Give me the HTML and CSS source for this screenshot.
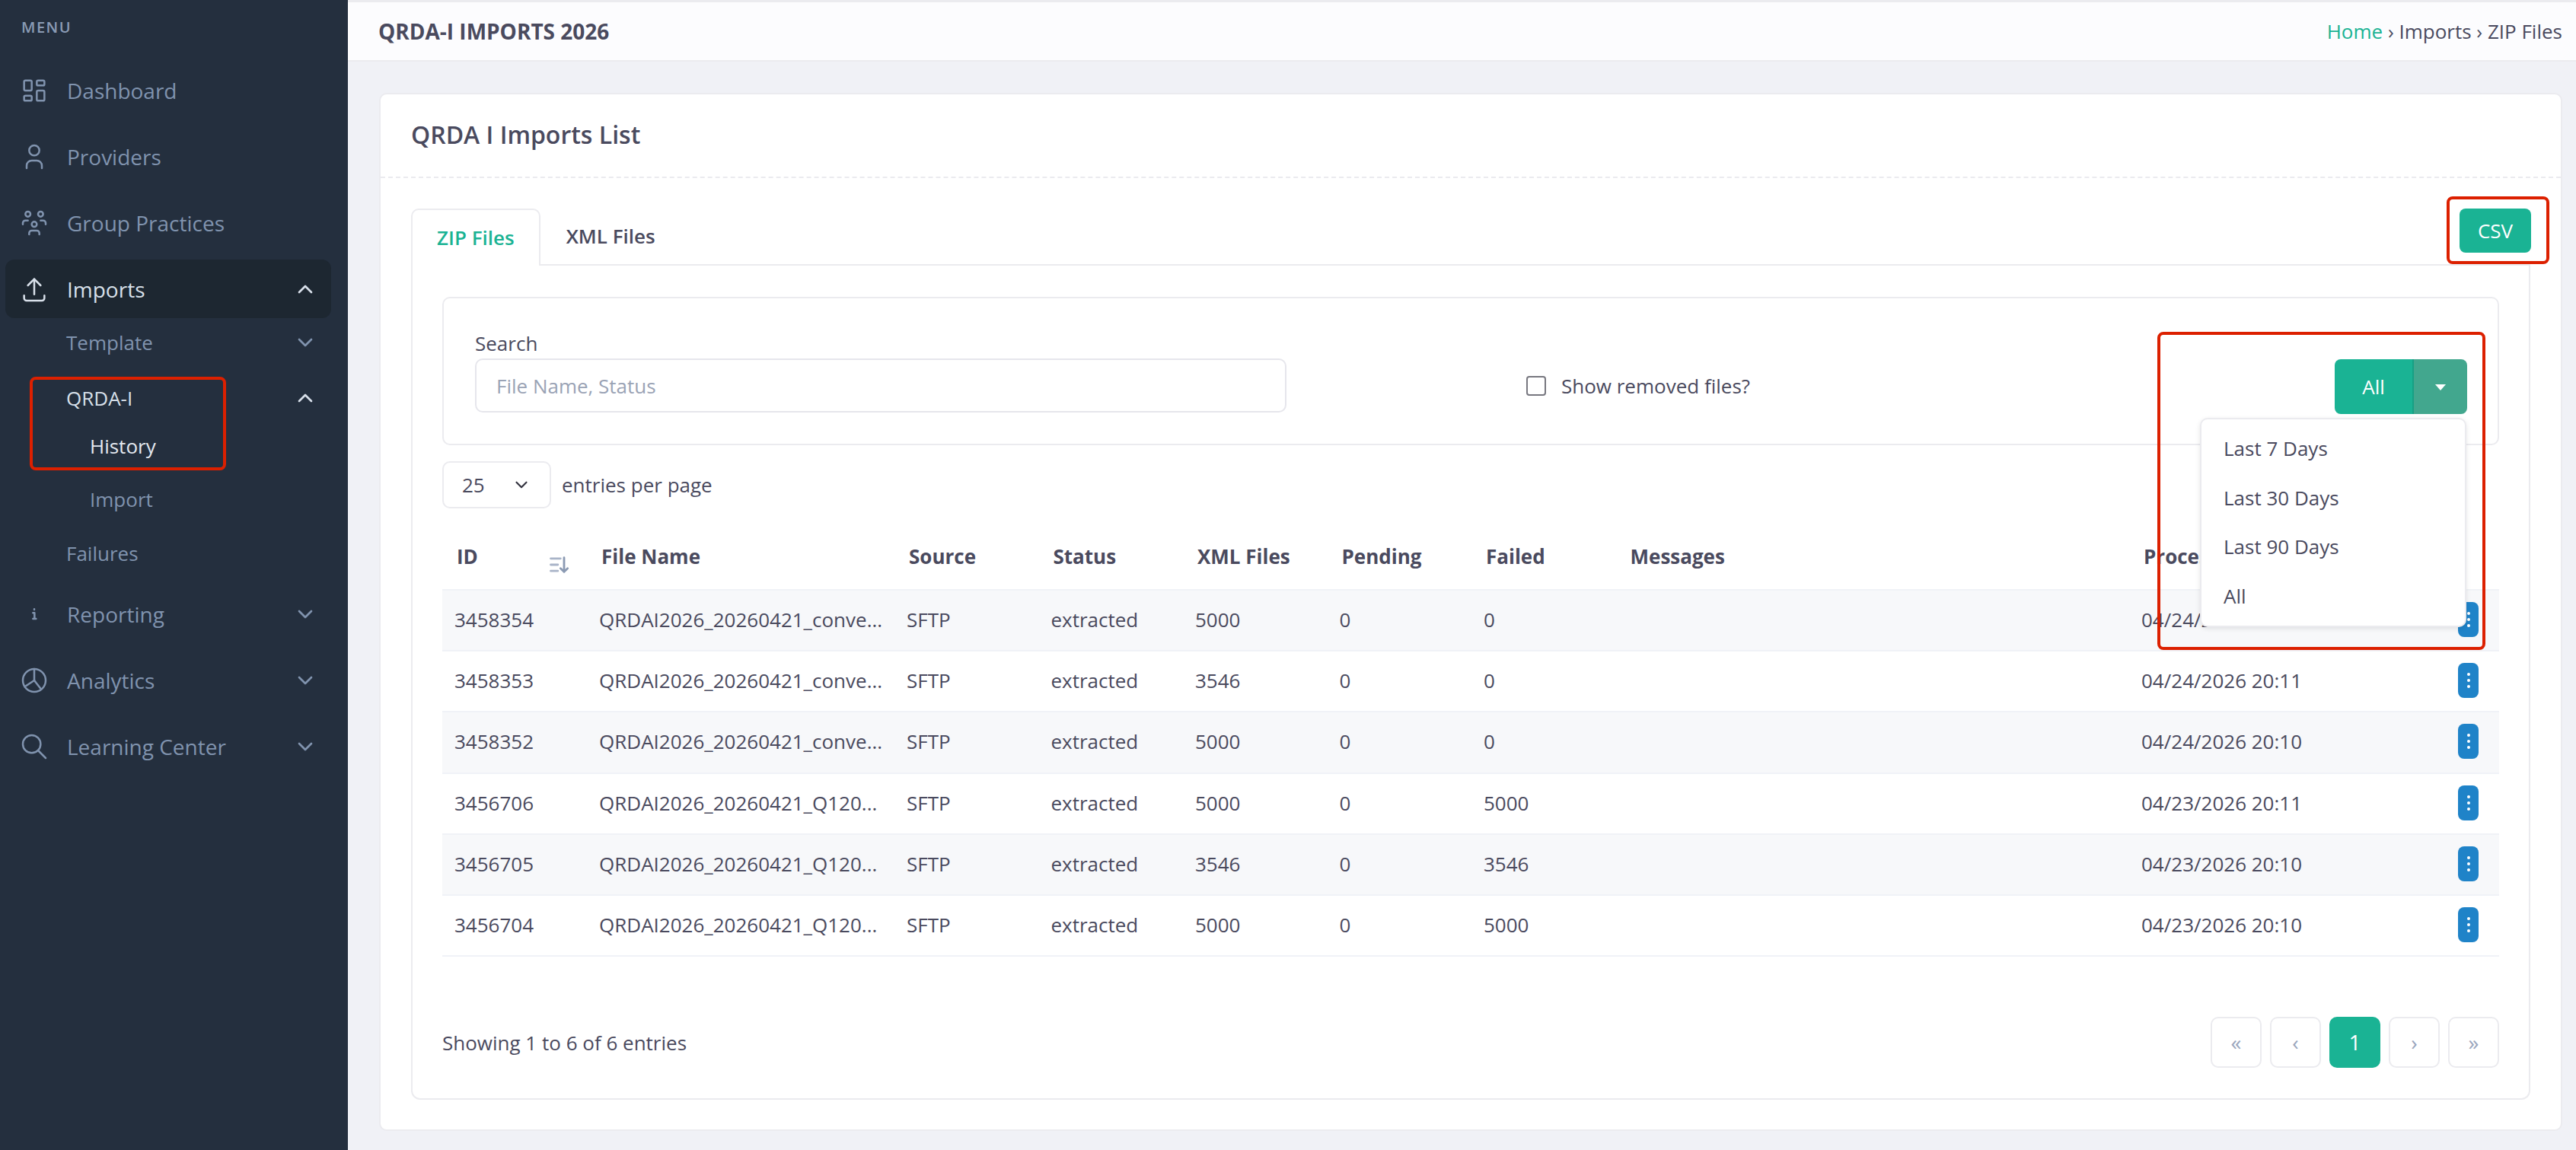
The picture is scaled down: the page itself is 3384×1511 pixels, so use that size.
FILE: index.html
```html
<!DOCTYPE html>
<html lang="en">
<head>
    <meta charset="UTF-8">
    <meta name="viewport" content="width=device-width, initial-scale=1.0">
    <title>QRDA-I Imports 2026</title>
    <link rel="stylesheet" href="styles.css">
</head>
<body>
    <aside class="sidebar">
        <div class="menu-label">MENU</div>
        <a class="nav-item">
            <svg class="nav-icon" viewBox="0 0 24 24"><path d="M5 4h4a1 1 0 0 1 1 1v6a1 1 0 0 1-1 1H5a1 1 0 0 1-1-1V5a1 1 0 0 1 1-1"/><path d="M5 16h4a1 1 0 0 1 1 1v2a1 1 0 0 1-1 1H5a1 1 0 0 1-1-1v-2a1 1 0 0 1 1-1"/><path d="M15 12h4a1 1 0 0 1 1 1v6a1 1 0 0 1-1 1h-4a1 1 0 0 1-1-1v-6a1 1 0 0 1 1-1"/><path d="M15 4h4a1 1 0 0 1 1 1v2a1 1 0 0 1-1 1h-4a1 1 0 0 1-1-1V5a1 1 0 0 1 1-1"/></svg>
            <span>Dashboard</span>
        </a>
        <a class="nav-item">
            <svg class="nav-icon" viewBox="0 0 24 24"><path d="M8 7a4 4 0 1 0 8 0a4 4 0 0 0-8 0"/><path d="M6 21v-2a4 4 0 0 1 4-4h4a4 4 0 0 1 4 4v2"/></svg>
            <span>Providers</span>
        </a>
        <a class="nav-item">
            <svg class="nav-icon" viewBox="0 0 24 24"><path d="M10 13a2 2 0 1 0 4 0a2 2 0 0 0-4 0"/><path d="M8 21v-1a2 2 0 0 1 2-2h4a2 2 0 0 1 2 2v1"/><path d="M15 5a2 2 0 1 0 4 0a2 2 0 0 0-4 0"/><path d="M17 10h2a2 2 0 0 1 2 2v1"/><path d="M5 5a2 2 0 1 0 4 0a2 2 0 0 0-4 0"/><path d="M3 13v-1a2 2 0 0 1 2-2h2"/></svg>
            <span>Group Practices</span>
        </a>
        <a class="nav-item nav-open">
            <svg class="nav-icon" viewBox="0 0 24 24"><path d="M4 17v2a2 2 0 0 0 2 2h12a2 2 0 0 0 2-2v-2"/><path d="M7 9l5-5l5 5"/><path d="M12 4v12"/></svg>
            <span>Imports</span>
            <svg class="chevron" viewBox="0 0 24 24"><path d="M6 15l6-6l6 6"/></svg>
        </a>
        <a class="sub-item">
            <span>Template</span>
            <svg class="chevron" viewBox="0 0 24 24"><path d="M6 9l6 6l6-6"/></svg>
        </a>
        <div class="sub-group">
            <div class="red-box nav-mark"></div>
            <a class="sub-item sub-active sub-qrda">
                <span>QRDA-I</span>
                <svg class="chevron" viewBox="0 0 24 24"><path d="M6 15l6-6l6 6"/></svg>
            </a>
            <a class="sub-sub-item sub-current">History</a>
        </div>
        <a class="sub-sub-item sub-import">Import</a>
        <a class="sub-item sub-failures"><span>Failures</span></a>
        <a class="nav-item">
            <svg class="nav-icon" viewBox="0 0 24 24"><path d="M11 11h1.2v4.6M11 15.6h2.4"/><path d="M12 8v.4"/></svg>
            <span>Reporting</span>
            <svg class="chevron" viewBox="0 0 24 24"><path d="M6 9l6 6l6-6"/></svg>
        </a>
        <a class="nav-item">
            <svg class="nav-icon" viewBox="0 0 24 24"><path d="M3 12a9 9 0 1 0 18 0a9 9 0 1 0-18 0"/><path d="M12 3v9"/><path d="M12 12l-7.500 5"/><path d="M12 12l5.500 7"/></svg>
            <span>Analytics</span>
            <svg class="chevron" viewBox="0 0 24 24"><path d="M6 9l6 6l6-6"/></svg>
        </a>
        <a class="nav-item">
            <svg class="nav-icon" viewBox="0 0 24 24"><path d="M3 10a7 7 0 1 0 14 0a7 7 0 1 0-14 0"/><path d="M21 21l-6-6"/></svg>
            <span>Learning Center</span>
            <svg class="chevron" viewBox="0 0 24 24"><path d="M6 9l6 6l6-6"/></svg>
        </a>
    </aside>

    <div class="main">
        <header class="topbar">
            <h1>QRDA-I IMPORTS 2026</h1>
            <div class="breadcrumb"><a>Home</a> › Imports › ZIP Files</div>
        </header>

        <div class="content">
            <section class="card">
                <div class="card-header">QRDA I Imports List</div>
                <div class="card-body">
                    <div class="tab-row">
                        <a class="tab tab-active">ZIP Files</a>
                        <a class="tab">XML Files</a>
                        <div class="csv-wrap">
                            <div class="red-box csv-mark"></div>
                            <button class="btn-green btn-csv">CSV</button>
                        </div>
                    </div>
                    <div class="tab-panel">
                        <div class="filter-card">
                            <div class="search-field">
                                <label>Search</label>
                                <input type="text" placeholder="File Name, Status">
                            </div>
                            <label class="removed-check"><span class="checkbox"></span>Show removed files?</label>
                            <div class="range-wrap">
                                <div class="split-btn">
                                    <button class="btn-green split-main">All</button>
                                    <button class="split-caret"><span class="caret"></span></button>
                                </div>
                                <ul class="dropdown">
                                    <li>Last 7 Days</li>
                                    <li>Last 30 Days</li>
                                    <li>Last 90 Days</li>
                                    <li>All</li>
                                </ul>
                                <div class="red-box range-mark"></div>
                            </div>
                        </div>

                        <div class="length-row">
                            <div class="length-select">
                                <span>25</span>
                                <svg viewBox="0 0 24 24"><path d="M6 9l6 6l6-6"/></svg>
                            </div>
                            <span>entries per page</span>
                        </div>

                        <table class="data-table">
                            <colgroup>
                                <col class="c-id"><col class="c-name"><col class="c-std"><col class="c-std"><col class="c-std"><col class="c-std"><col class="c-std"><col class="c-msg"><col class="c-date"><col>
                            </colgroup>
                            <thead>
                                <tr>
                                    <th class="th-sorted">ID
                                        <svg class="sort-icon" viewBox="0 0 24 24"><path d="M3 5h11M3 12h8M3 19h8"/><path class="sort-arrow" d="M18 4v16M14 16l4 4l4-4"/></svg>
                                    </th>
                                    <th>File Name</th>
                                    <th>Source</th>
                                    <th>Status</th>
                                    <th>XML Files</th>
                                    <th>Pending</th>
                                    <th>Failed</th>
                                    <th>Messages</th>
                                    <th>Processed</th>
                                    <th></th>
                                </tr>
                            </thead>
                            <tbody>
                                <tr>
                                    <td>3458354</td><td>QRDAI2026_20260421_conve...</td><td>SFTP</td><td>extracted</td><td>5000</td><td>0</td><td>0</td><td></td><td>04/24/2026 20:11</td>
                                    <td><button class="btn-dots"><i></i><i></i><i></i></button></td>
                                </tr>
                                <tr>
                                    <td>3458353</td><td>QRDAI2026_20260421_conve...</td><td>SFTP</td><td>extracted</td><td>3546</td><td>0</td><td>0</td><td></td><td>04/24/2026 20:11</td>
                                    <td><button class="btn-dots"><i></i><i></i><i></i></button></td>
                                </tr>
                                <tr>
                                    <td>3458352</td><td>QRDAI2026_20260421_conve...</td><td>SFTP</td><td>extracted</td><td>5000</td><td>0</td><td>0</td><td></td><td>04/24/2026 20:10</td>
                                    <td><button class="btn-dots"><i></i><i></i><i></i></button></td>
                                </tr>
                                <tr>
                                    <td>3456706</td><td>QRDAI2026_20260421_Q120...</td><td>SFTP</td><td>extracted</td><td>5000</td><td>0</td><td>5000</td><td></td><td>04/23/2026 20:11</td>
                                    <td><button class="btn-dots"><i></i><i></i><i></i></button></td>
                                </tr>
                                <tr>
                                    <td>3456705</td><td>QRDAI2026_20260421_Q120...</td><td>SFTP</td><td>extracted</td><td>3546</td><td>0</td><td>3546</td><td></td><td>04/23/2026 20:10</td>
                                    <td><button class="btn-dots"><i></i><i></i><i></i></button></td>
                                </tr>
                                <tr>
                                    <td>3456704</td><td>QRDAI2026_20260421_Q120...</td><td>SFTP</td><td>extracted</td><td>5000</td><td>0</td><td>5000</td><td></td><td>04/23/2026 20:10</td>
                                    <td><button class="btn-dots"><i></i><i></i><i></i></button></td>
                                </tr>
                            </tbody>
                        </table>

                        <div class="table-footer">
                            <span>Showing 1 to 6 of 6 entries</span>
                            <div class="pagination">
                                <a>«</a><a>‹</a><a class="page-active">1</a><a>›</a><a>»</a>
                            </div>
                        </div>
                    </div>
                </div>
            </section>
        </div>
    </div>
</body>
</html>
```

FILE: styles.css
```css
* {
    box-sizing: border-box;
}
html, body {
    height: 100%;
}
body {
    margin: 0;
    display: flex;
    height: 1511px;
    overflow: hidden;
    font-family: "Open Sans", "Liberation Sans", sans-serif;
    font-size: 26px;
    color: #4a4a5e;
    background-color: #f0f1f6;
}

/* sidebar */
.sidebar {
    width: 457px;
    flex: none;
    background-color: #242f3e;
    color: #8093ae;
    padding: 0 22px 0 7px;
    font-size: 28px;
}
.menu-label {
    height: 75px;
    padding: 23px 0 0 21px;
    font-size: 20px;
    line-height: 26px;
    font-weight: 600;
    letter-spacing: 1.5px;
    color: #8a9bb5;
}
.nav-item {
    display: flex;
    align-items: center;
    height: 87px;
    padding: 0 18px 0 18px;
}
.nav-item span,
.sub-item span {
    flex: 1;
}
.nav-icon {
    width: 40px;
    height: 40px;
    margin-right: 23px;
    flex: none;
    fill: none;
    stroke: currentColor;
    stroke-width: 1.5;
    stroke-linecap: round;
    stroke-linejoin: round;
}
.chevron {
    width: 32px;
    height: 32px;
    flex: none;
    fill: none;
    stroke: currentColor;
    stroke-width: 2;
    stroke-linecap: round;
    stroke-linejoin: round;
}
.nav-open {
    height: 77px;
    margin-top: 5px;
    background-color: #1d2731;
    border-radius: 12px;
    color: #d8e0ea;
}
.sub-item {
    display: flex;
    align-items: center;
    height: 64px;
    padding: 0 18px 0 80px;
    font-size: 26px;
}
.sub-group {
    position: relative;
    padding-top: 12px;
}
.sub-qrda {
    height: 58px;
}
.sub-active {
    color: #d8e0ea;
}
.sub-sub-item {
    display: block;
    height: 68px;
    line-height: 68px;
    padding-left: 111px;
    font-size: 26px;
}
.sub-current {
    font-weight: 500;
    color: #e4e9f0;
}
.sub-import {
    height: 74px;
    line-height: 72px;
}
.sub-failures {
    height: 66px;
    margin-bottom: 3px;
}

/* red annotation frames */
.red-box {
    position: absolute;
    border: 4px solid #dc2000;
    border-radius: 8px;
    pointer-events: none;
    z-index: 20;
}
.nav-mark {
    left: 32px;
    top: 13px;
    width: 258px;
    height: 123px;
}
.csv-mark {
    left: -17px;
    top: -16px;
    width: 135px;
    height: 89px;
}
.range-mark {
    right: -24px;
    top: -36px;
    width: 431px;
    height: 418px;
}

/* top bar */
.main {
    flex: 1;
    min-width: 0;
}
.topbar {
    display: flex;
    justify-content: space-between;
    align-items: center;
    height: 81px;
    padding: 0 18px 0 40px;
    background-color: #fcfcfe;
    border-top: 3px solid #ebebef;
    border-bottom: 2px solid #ebebef;
}
.topbar h1 {
    margin: 0;
    font-size: 28px;
    font-weight: 700;
}
.breadcrumb a {
    color: #1ab394;
}
.content {
    padding: 41px 18px 0 41px;
}

/* card */
.card {
    height: 1364px;
    background: #fff;
    border: 2px solid #ebebef;
    border-radius: 10px;
}
.card-header {
    height: 110px;
    padding: 0 40px;
    line-height: 106px;
    font-size: 32px;
    font-weight: 600;
    border-bottom: 2px dashed #ebebef;
}
.card-body {
    padding: 40px 40px 0;
}
.tab-row {
    display: flex;
    height: 75px;
    border-bottom: 2px solid #ebebef;
}
.tab {
    height: 75px;
    padding: 0 34px;
    line-height: 72px;
    font-weight: 600;
}
.tab-active {
    padding: 0 32px;
    color: #1ab394;
    background: #fff;
    border: 2px solid #ebebef;
    border-bottom: none;
    border-radius: 10px 10px 0 0;
}
.csv-wrap {
    position: relative;
    margin-left: auto;
    margin-right: -1px;
    width: 94px;
    height: 58px;
}
.btn-green {
    border: none;
    color: #fff;
    background-color: #1ab394;
    font-family: inherit;
    font-weight: 500;
}
.btn-csv {
    width: 94px;
    height: 58px;
    font-size: 26px;
    border-radius: 8px;
}
.tab-panel {
    height: 1096px;
    padding: 41px 39px 0;
    border: 2px solid #ebebef;
    border-top: none;
    border-radius: 0 0 12px 12px;
}

/* filter */
.filter-card {
    display: flex;
    align-items: flex-start;
    height: 195px;
    padding: 40px 40px 0 41px;
    border: 2px solid #ebebef;
    border-radius: 10px;
}
.search-field {
    width: 1066px;
}
.search-field label {
    display: block;
    line-height: 39px;
}
.search-field input {
    display: block;
    width: 100%;
    height: 71px;
    padding: 0 26px;
    border: 2px solid #e6e6ec;
    border-radius: 10px;
    font-family: inherit;
    font-size: 26px;
    color: #4a4a5e;
}
.search-field input::placeholder {
    color: #9aa3b5;
}
.removed-check {
    display: flex;
    align-items: center;
    margin: 57px 0 0 315px;
}
.checkbox {
    width: 26px;
    height: 26px;
    margin-right: 20px;
    background: #fff;
    border: 2px solid #77777f;
    border-radius: 4px;
}
.range-wrap {
    position: relative;
    margin: 40px 0 0 auto;
}
.split-btn {
    display: flex;
    height: 72px;
}
.split-main {
    width: 104px;
    font-size: 26px;
    border-radius: 8px 0 0 8px;
    border-right: 2px solid #17a084;
}
.split-caret {
    width: 70px;
    border: none;
    background-color: #42a78e;
    border-radius: 0 8px 8px 0;
}
.caret {
    display: inline-block;
    border-top: 8px solid #fff;
    border-left: 7px solid transparent;
    border-right: 7px solid transparent;
}
.dropdown {
    position: absolute;
    top: 77px;
    right: 1px;
    width: 350px;
    height: 275px;
    margin: 0;
    padding: 6px 0 0;
    list-style: none;
    background: #fff;
    border: 2px solid #ebebef;
    border-radius: 10px;
    box-shadow: 0 2px 6px rgba(0,0,0,0.1);
    z-index: 10;
}
.dropdown li {
    height: 64.5px;
    line-height: 64px;
    padding-left: 29px;
}

/* entries per page */
.length-row {
    display: flex;
    align-items: center;
    gap: 14px;
    margin-top: 21px;
}
.length-select {
    display: flex;
    align-items: center;
    justify-content: space-between;
    width: 143px;
    height: 62px;
    padding: 0 24px;
    border: 2px solid #ebebef;
    border-radius: 10px;
}
.length-select svg {
    width: 26px;
    height: 26px;
    fill: none;
    stroke: #33333f;
    stroke-width: 2;
    stroke-linecap: round;
    stroke-linejoin: round;
}

/* table */
.data-table {
    width: 100%;
    margin-top: 24px;
    table-layout: fixed;
    border-collapse: collapse;
}
.c-id { width: 190px; }
.c-name { width: 404px; }
.c-std { width: 189.5px; }
.c-msg { width: 674.5px; }
.c-date { width: 412px; }
.data-table th {
    height: 83px;
    padding: 0 19px 5px;
    text-align: left;
    font-weight: 700;
    white-space: nowrap;
}
.th-sorted {
    position: relative;
}
.sort-icon {
    position: absolute;
    right: 23px;
    top: 36px;
    width: 28px;
    height: 28px;
    fill: none;
    stroke: #a9b4c8;
    stroke-width: 2.4;
    stroke-linecap: round;
}
.sort-icon .sort-arrow {
    stroke: #8b9ab3;
}
.data-table td {
    height: 80.2px;
    padding: 0 16px 2px;
    border-top: 2px solid #f0f2f7;
    white-space: nowrap;
}
.data-table tbody tr:last-child td {
    border-bottom: 2px solid #f0f2f7;
}
.data-table tbody tr:nth-child(odd) {
    background-color: #f7f8fa;
}
.btn-dots {
    display: inline-flex;
    flex-direction: column;
    align-items: center;
    justify-content: center;
    gap: 4px;
    width: 27px;
    height: 46px;
    padding: 0;
    margin-left: 4px;
    vertical-align: middle;
    border: none;
    border-radius: 8px;
    background-color: #1f83c8;
}
.btn-dots i {
    width: 4px;
    height: 4px;
    border-radius: 50%;
    background: #fff;
}

/* footer */
.table-footer {
    display: flex;
    justify-content: space-between;
    align-items: center;
    margin-top: 79px;
}
.pagination {
    display: flex;
    gap: 11px;
}
.pagination a {
    width: 67px;
    height: 67px;
    text-align: center;
    line-height: 63px;
    font-size: 28px;
    color: #9aa6bd;
    border: 2px solid #ebebef;
    border-radius: 10px;
}
.pagination .page-active {
    color: #fff;
    background-color: #1ab394;
    border-color: #1ab394;
}
```
